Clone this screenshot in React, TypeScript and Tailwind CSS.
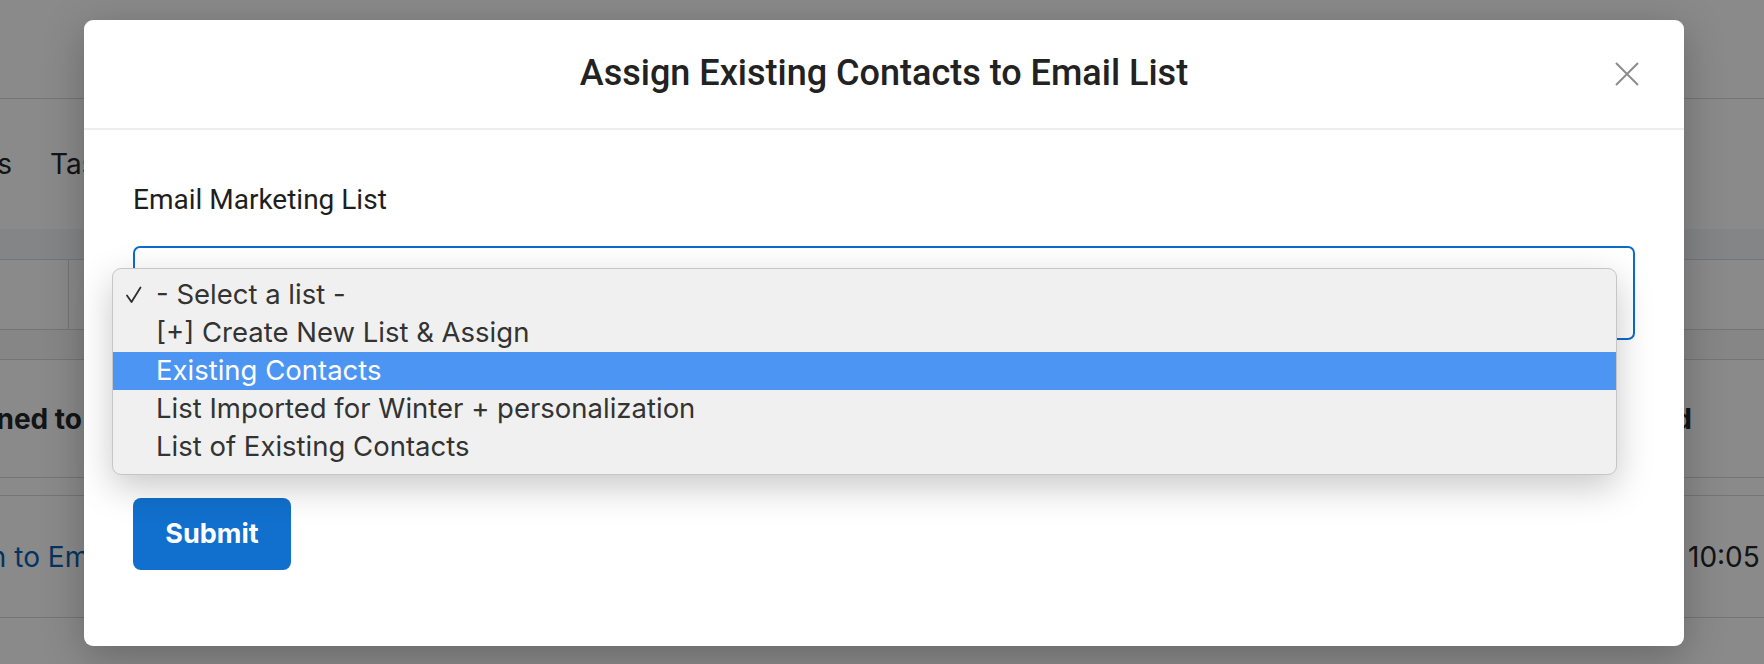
import React from 'react';

const options = [
  { label: '- Select a list -', checked: true },
  { label: '[+] Create New List & Assign' },
  { label: 'Existing Contacts', active: true },
  { label: 'List Imported for Winter + personalization' },
  { label: 'List of Existing Contacts' },
];

const CloseIcon: React.FC = () => (
  <svg width="26" height="26" viewBox="0 0 26 26" fill="none" stroke="#8c8c8c" strokeWidth="2">
    <path d="M2 2 L24 24 M24 2 L2 24" />
  </svg>
);

const CheckIcon: React.FC = () => (
  <svg width="18" height="18" viewBox="0 0 18 18" fill="none" stroke="#2e2e2e" strokeWidth="1.8" strokeLinecap="round" strokeLinejoin="round">
    <path d="M2 9.5 L6.5 16 L15.5 1.5" />
  </svg>
);

const BackgroundPage: React.FC = () => (
  <div className="flex flex-col w-full h-full bg-white font-['Inter'] text-[#22262a] whitespace-nowrap">
    <div className="h-[99px] border-b border-[#d6d9dd]" />
    {/* Tabs */}
    <div className="h-[130px] flex items-center">
      <div className="w-[12px] flex justify-end overflow-hidden text-[28px]">
        <span>Contacts</span>
      </div>
      <span className="ml-[38px] text-[28px]">Tasks</span>
    </div>
    <div className="h-[31px] bg-[#f4f6f9] border-b border-[#d6d9dd]" />
    <div className="h-[70px] flex border-b border-[#d6d9dd]">
      <div className="w-[69px] border-r border-[#d6d9dd]" />
      <div className="flex-1" />
    </div>
    <div className="h-[30px] border-b border-[#d6d9dd] bg-[#f7f7f7]" />
    <div className="h-[118px] flex items-center justify-between border-b border-[#d6d9dd] text-[28px] font-bold">
      <div className="w-[82px] flex justify-end overflow-hidden">
        <span>Assigned to</span>
      </div>
      <div className="w-[100px] flex justify-end overflow-hidden pr-[72px]">
        <span>Created</span>
      </div>
    </div>
    <div className="h-[18px] border-b border-[#d6d9dd]" />
    <div className="h-[122px] flex items-center justify-between border-b border-[#d6d9dd] text-[28px]">
      <div className="w-[84px] overflow-hidden">
        <span className="block -ml-[83px] text-[#0a5fb4]">Assign to Email List</span>
      </div>
      <div className="w-[76px] overflow-hidden">
        <span>10:05 AM</span>
      </div>
    </div>
  </div>
);

export default function App() {
  return (
    <div className="relative w-[1764px] h-[664px] overflow-hidden">
      <BackgroundPage />

      {/* Overlay */}
      <div className="absolute inset-0 bg-[rgba(0,0,0,0.46)] pt-[20px] pl-[84px]">
        <div className="w-[1600px] h-[626px] bg-white rounded-[9px] shadow-[0_10px_40px_rgba(0,0,0,0.25)] flex flex-col font-['Roboto']">
          {/* Header */}
          <div className="h-[110px] grid grid-cols-[1fr_auto_1fr] items-center border-b-2 border-[#eeeeee] px-[44px]">
            <div />
            <h2 className="text-[36px] font-medium text-[#222] pb-[2px]">
              Assign Existing Contacts to Email List
            </h2>
            <button className="justify-self-end">
              <CloseIcon />
            </button>
          </div>

          {/* Body */}
          <div className="flex flex-col px-[49px] pt-[50px]">
            <label className="text-[28px] leading-[40px] text-[#1e1e1e]">Email Marketing List</label>

            <div className="relative mt-[26px]">
              <div className="h-[94px] rounded-[7px] border-2 border-[#0a6ccf] bg-white" />

              {/* Native select popup */}
              <div className="absolute left-[-21px] top-[22px] w-[1505px] pt-[7px] pb-[8px] bg-[#f0f0f0] border border-[#c6c6c6] rounded-[9px] shadow-[0_12px_36px_rgba(0,0,0,0.22)] font-['Inter'] text-[27.5px]">
                {options.map(o => (
                  <div
                    key={o.label}
                    className={
                      o.active
                        ? 'h-[38px] flex items-center bg-[#4c95f2] text-white'
                        : 'h-[38px] flex items-center text-[#333333]'
                    }
                  >
                    <span className="w-[43px] pl-[12px] flex items-center">{o.checked ? <CheckIcon /> : null}</span>
                    <span>{o.label}</span>
                  </div>
                ))}
              </div>
            </div>

            <div className="mt-[158px]">
              <button className="w-[158px] h-[72px] rounded-[8px] bg-[#1170cd] text-white text-[27px] font-bold font-['Inter']">
                Submit
              </button>
            </div>
          </div>
        </div>
      </div>
    </div>
  );
}
